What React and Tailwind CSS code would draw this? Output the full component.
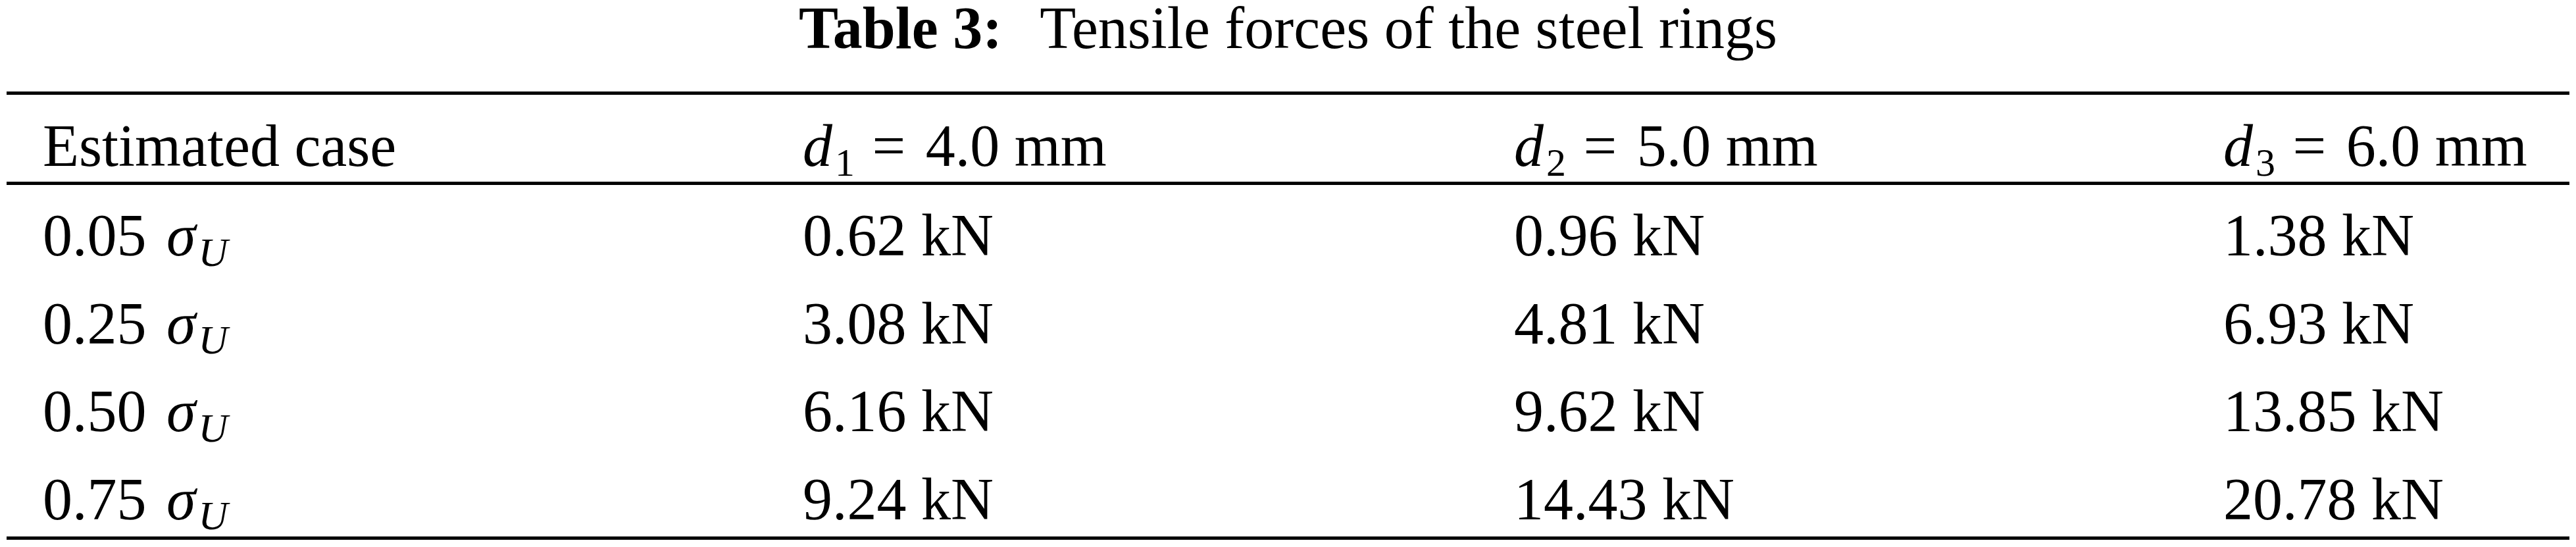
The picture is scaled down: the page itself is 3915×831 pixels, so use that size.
import React from "react";

const rows = [
  ["0.05", "0.62 kN", "0.96 kN", "1.38 kN"],
  ["0.25", "3.08 kN", "4.81 kN", "6.93 kN"],
  ["0.50", "6.16 kN", "9.62 kN", "13.85 kN"],
  ["0.75", "9.24 kN", "14.43 kN", "20.78 kN"],
];

function D({ n, v }) {
  return (
    <span>
      <span className="italic">d</span>
      <sub className="text-[60px] ml-[4px]">{n}</sub>
      <span> </span>
      <span className="ml-[4px] mr-[8px]">=</span>
      <span> {v} mm</span>
    </span>
  );
}

function Sigma({ k }) {
  return (
    <span>
      {k}{" "}
      <span className="italic ml-[8px]">σ</span>
      <sub className="text-[62px] italic ml-[4px]">U</sub>
    </span>
  );
}

export default function App() {
  const grid = "grid grid-cols-[1210px_1081px_1078px_1fr]";
  return (
    <div className="w-[3915px] h-[831px] bg-white text-black font-['Liberation_Serif','Times_New_Roman',serif] text-[90px] overflow-hidden">
      <div className="ml-[10px] w-[3895px]">
        <div className="h-[85px] leading-[85px] text-center whitespace-nowrap">
          <span className="font-bold">Table 3:</span>
          <span className="ml-[57px]">Tensile forces of the steel rings</span>
        </div>
        <div className="mt-[54px] border-t-[5px] border-b-[5px] border-black">
          <div className={`${grid} h-[132px] leading-[90px] pt-[33px] whitespace-nowrap`}>
            <div className="pl-[55px]">Estimated case</div>
            <div><D n="1" v="4.0" /></div>
            <div><D n="2" v="5.0" /></div>
            <div><D n="3" v="6.0" /></div>
          </div>
        </div>
        <div className="border-b-[5px] border-black">
          {rows.map((r) => (
            <div
              key={r[0]}
              className={`${grid} h-[133.5px] leading-[90px] pt-[32px] whitespace-nowrap`}
            >
              <div className="pl-[55px]"><Sigma k={r[0]} /></div>
              <div>{r[1]}</div>
              <div>{r[2]}</div>
              <div>{r[3]}</div>
            </div>
          ))}
        </div>
      </div>
    </div>
  );
}
